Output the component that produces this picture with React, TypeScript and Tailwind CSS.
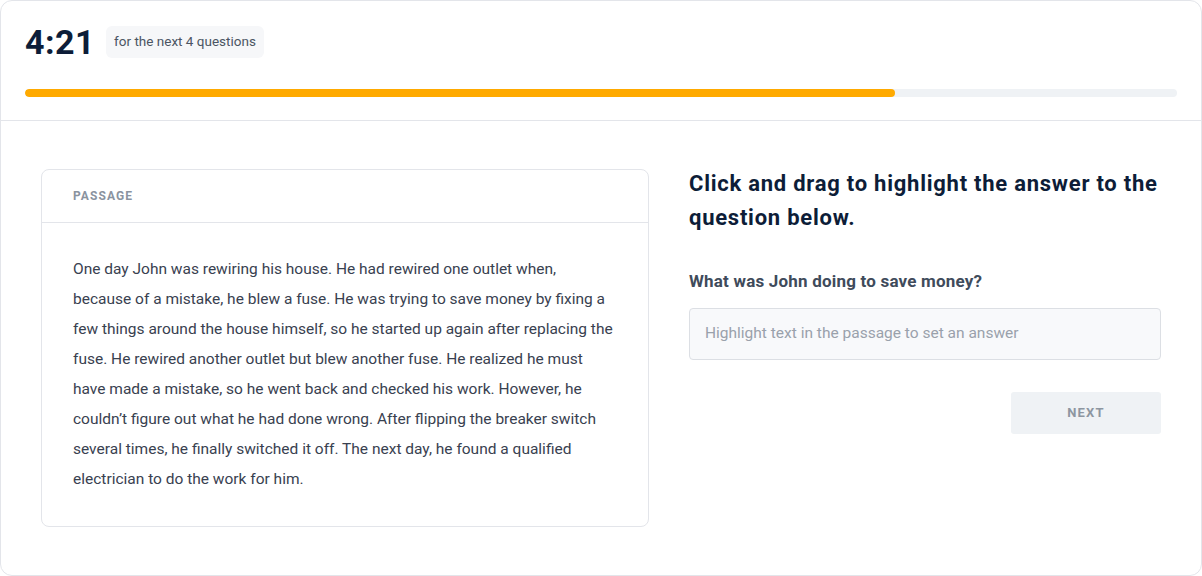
import React from "react";

const lines = [
  "One day John was rewiring his house. He had rewired one outlet when,",
  "because of a mistake, he blew a fuse. He was trying to save money by fixing a",
  "few things around the house himself, so he started up again after replacing the",
  "fuse. He rewired another outlet but blew another fuse. He realized he must",
  "have made a mistake, so he went back and checked his work. However, he",
  "couldn\u2019t figure out what he had done wrong. After flipping the breaker switch",
  "several times, he finally switched it off. The next day, he found a qualified",
  "electrician to do the work for him.",
];

export default function App() {
  return (
    <div
      className="w-[1202px] h-[576px] bg-white"
      style={{ fontFamily: "Roboto, 'Noto Sans', sans-serif" }}
    >
      <div className="h-full border border-[#e3e5ea] rounded-[12px] flex flex-col">
        <div className="px-[24px] pt-[24px] h-[120px] border-b border-[#e3e5ea] flex flex-col">
          <div className="flex items-center gap-[11px]">
            <div className="text-[34px] leading-[34px] font-bold text-[#0d1d38] tracking-[0.5px]">4:21</div>
            <div className="h-[32px] px-[8px] rounded-[6px] bg-[#f6f7f9] text-[13.5px] text-[#4b5563] flex items-center pb-[1px]">
              for the next 4 questions
            </div>
          </div>
          <div className="mt-[30px] h-[8px] rounded-full bg-[#eff2f5] overflow-hidden">
            <div className="h-full w-[870px] rounded-full bg-[#ffaa00]" />
          </div>
        </div>
        <div className="flex px-[40px] pt-[48px] gap-[40px]">
          <div className="w-[608px] shrink-0 h-[358px] border border-[#e3e5ea] rounded-[8px] flex flex-col">
            <div className="h-[53px] border-b border-[#e3e5ea] px-[31px] flex items-center text-[12px] font-bold tracking-[1.1px] text-[#8a939f]">
              PASSAGE
            </div>
            <div className="px-[31px] pt-[31px] text-[15.5px] leading-[30px] text-[#394150]">
              {lines.map((l, i) => (
                <div key={i} className="whitespace-nowrap">{l}</div>
              ))}
            </div>
          </div>
          <div className="flex-1 min-w-0">
            <div className="text-[22px] leading-[34px] font-bold text-[#0d1d38] tracking-[0.75px] -mt-[2px]">
              Click and drag to highlight the answer to the
              <br />
              question below.
            </div>
            <div className="mt-[35px] text-[17px] leading-[22px] font-bold text-[#3f4b5b] tracking-[0.2px]">
              What was John doing to save money?
            </div>
            <div className="mt-[16px] w-[472px] h-[52px] rounded-[4px] border border-[#dcdfe4] bg-[#f8f9fb] flex items-center px-[15px] text-[15.5px] text-[#9aa1ab]">
              Highlight text in the passage to set an answer
            </div>
            <div className="w-[472px] flex justify-end mt-[32px]">
              <div className="w-[150px] h-[42px] rounded-[3px] bg-[#eff2f5] flex items-center justify-center text-[13px] font-bold tracking-[1.2px] text-[#8d96a1]">
                NEXT
              </div>
            </div>
          </div>
        </div>
      </div>
    </div>
  );
}
